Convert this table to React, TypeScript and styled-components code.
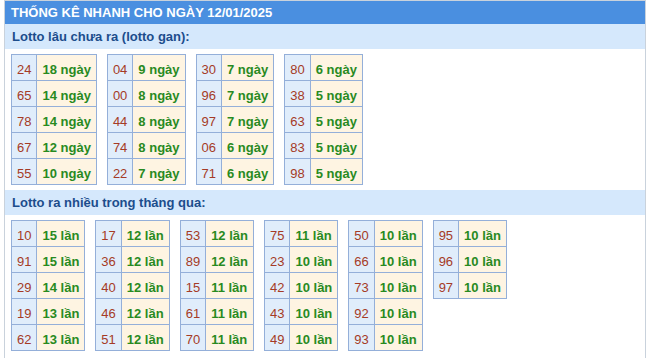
import React from "react";
import styled, { createGlobalStyle } from "styled-components";

const Global = createGlobalStyle`
  html, body { margin: 0; padding: 0; background: #ffffff; }
  body { font-family: "Liberation Sans", Arial, sans-serif; }
`;

const Page = styled.div`
  margin: 0 6px 0 4px;
  border: 1px solid #c9d2dc;
  border-bottom: none;
  min-height: 357px;
  background: #ffffff;
`;

const Header = styled.div`
  height: 23px;
  line-height: 23px;
  background: #4a8fe0;
  color: #ffffff;
  font-size: 13px;
  font-weight: bold;
  padding-left: 6px;
`;

const Label = styled.div`
  height: 25px;
  line-height: 25px;
  background: #d5e8fc;
  color: #1c4d8c;
  font-size: 13px;
  font-weight: bold;
  padding-left: 7px;
`;

const Tables = styled.div<{ $gap: number }>`
  display: flex;
  flex-wrap: wrap;
  align-items: flex-start;
  gap: ${(p) => p.$gap}px;
  padding: 5px 6px 5px 6px;
`;

const Table = styled.table`
  border-collapse: collapse;
  font-size: 13px;
`;

const NumCell = styled.td`
  border: 1px solid #94afd9;
  background: #e0edfb;
  color: #a53b26;
  height: 21px;
  padding: 4px 5px 0 5px;
  text-align: center;
`;

const ValCell = styled.td`
  border: 1px solid #94afd9;
  background: #fef4e2;
  color: #288a1f;
  font-weight: bold;
  height: 21px;
  padding: 4px 5px 0 5px;
  white-space: nowrap;
`;

type Row = [string, string];

const gan: Row[][] = [
  [["24", "18 ngày"], ["65", "14 ngày"], ["78", "14 ngày"], ["67", "12 ngày"], ["55", "10 ngày"]],
  [["04", "9 ngày"], ["00", "8 ngày"], ["44", "8 ngày"], ["74", "8 ngày"], ["22", "7 ngày"]],
  [["30", "7 ngày"], ["96", "7 ngày"], ["97", "7 ngày"], ["06", "6 ngày"], ["71", "6 ngày"]],
  [["80", "6 ngày"], ["38", "5 ngày"], ["63", "5 ngày"], ["83", "5 ngày"], ["98", "5 ngày"]],
];

const nhieu: Row[][] = [
  [["10", "15 lần"], ["91", "15 lần"], ["29", "14 lần"], ["19", "13 lần"], ["62", "13 lần"]],
  [["17", "12 lần"], ["36", "12 lần"], ["40", "12 lần"], ["46", "12 lần"], ["51", "12 lần"]],
  [["53", "12 lần"], ["89", "12 lần"], ["15", "11 lần"], ["61", "11 lần"], ["70", "11 lần"]],
  [["75", "11 lần"], ["23", "10 lần"], ["42", "10 lần"], ["43", "10 lần"], ["49", "10 lần"]],
  [["50", "10 lần"], ["66", "10 lần"], ["73", "10 lần"], ["92", "10 lần"], ["93", "10 lần"]],
  [["95", "10 lần"], ["96", "10 lần"], ["97", "10 lần"]],
];

const Block = ({ rows }: { rows: Row[] }) => (
  <Table>
    <tbody>
      {rows.map(([n, v]) => (
        <tr key={n}>
          <NumCell>{n}</NumCell>
          <ValCell>{v}</ValCell>
        </tr>
      ))}
    </tbody>
  </Table>
);

export default function App() {
  return (
    <>
      <Global />
      <Page>
        <Header>THỐNG KÊ NHANH CHO NGÀY 12/01/2025</Header>
        <Label>Lotto lâu chưa ra (lotto gan):</Label>
        <Tables $gap={10}>
          {gan.map((rows, i) => (
            <Block key={i} rows={rows} />
          ))}
        </Tables>
        <Label>Lotto ra nhiều trong tháng qua:</Label>
        <Tables $gap={10}>
          {nhieu.map((rows, i) => (
            <Block key={i} rows={rows} />
          ))}
        </Tables>
      </Page>
    </>
  );
}
